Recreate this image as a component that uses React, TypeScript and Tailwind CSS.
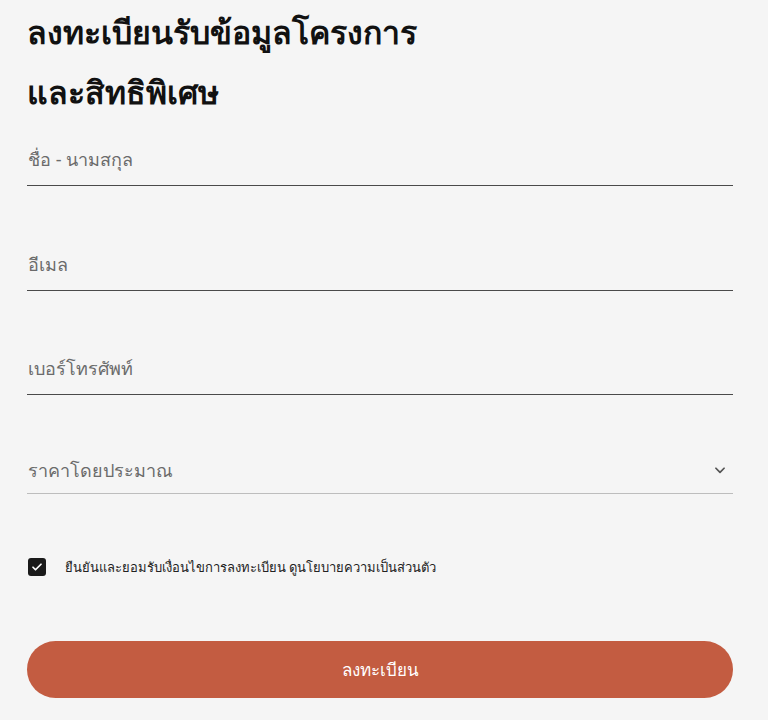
import React, { useState } from 'react'

function Field({ label, select = false }: { label: string; select?: boolean }) {
  return (
    <div
      className={
        'flex h-[52px] items-end justify-between border-b ' +
        (select ? 'mt-[-6px] border-[#bdbdbd] pb-[9px]' : 'border-[#4a4a4a] pb-[12px]')
      }
    >
      <span className="pl-[1px] text-[18px] leading-[28px] text-[#6b6b6b]">{label}</span>
      {select && (
        <svg width="14" height="14" viewBox="0 0 24 24" fill="none" stroke="#555" strokeWidth="3" strokeLinecap="round" strokeLinejoin="round" className="mb-[7px] mr-[6px]">
          <path d="M5 9l7 7 7-7" />
        </svg>
      )}
    </div>
  )
}

export default function App() {
  const [agree, setAgree] = useState(true)

  return (
    <div className="min-h-[720px] bg-[#f5f5f5] pl-[27px] pr-[35px] pt-[2px] font-['Noto_Sans','Liberation_Sans',sans-serif] text-[#111]">
      <h1 className="text-[32px] font-bold leading-[60px] text-[#111]">
        ลงทะเบียนรับข้อมูลโครงการ
        <br />
        และสิทธิพิเศษ
      </h1>

      {/* Form fields */}
      <div className="mt-[12px] flex flex-col gap-[52.5px]">
        <Field label="ชื่อ - นามสกุล" />
        <Field label="อีเมล" />
        <Field label="เบอร์โทรศัพท์" />
        <Field label="ราคาโดยประมาณ" select />
      </div>

      <label className="mt-[64px] flex items-center gap-[19px]">
        <button
          type="button"
          onClick={() => setAgree(!agree)}
          className="ml-[1px] flex h-[18px] w-[18px] items-center justify-center rounded-[3px] bg-[#1a1a1a]"
        >
          {agree && (
            <svg width="12" height="12" viewBox="0 0 24 24" fill="none" stroke="#fff" strokeWidth="3.5" strokeLinecap="round" strokeLinejoin="round">
              <path d="M4 12.5l5 5L20 6.5" />
            </svg>
          )}
        </button>
        <span className="text-[13px] text-[#222]">ยืนยันและยอมรับเงื่อนไขการลงทะเบียน ดูนโยบายความเป็นส่วนตัว</span>
      </label>

      <button
        type="button"
        className="mt-[64px] flex h-[57px] w-full items-center justify-center rounded-full bg-[#c35c41] text-[17px] font-medium text-white"
      >
        ลงทะเบียน
      </button>
    </div>
  )
}
